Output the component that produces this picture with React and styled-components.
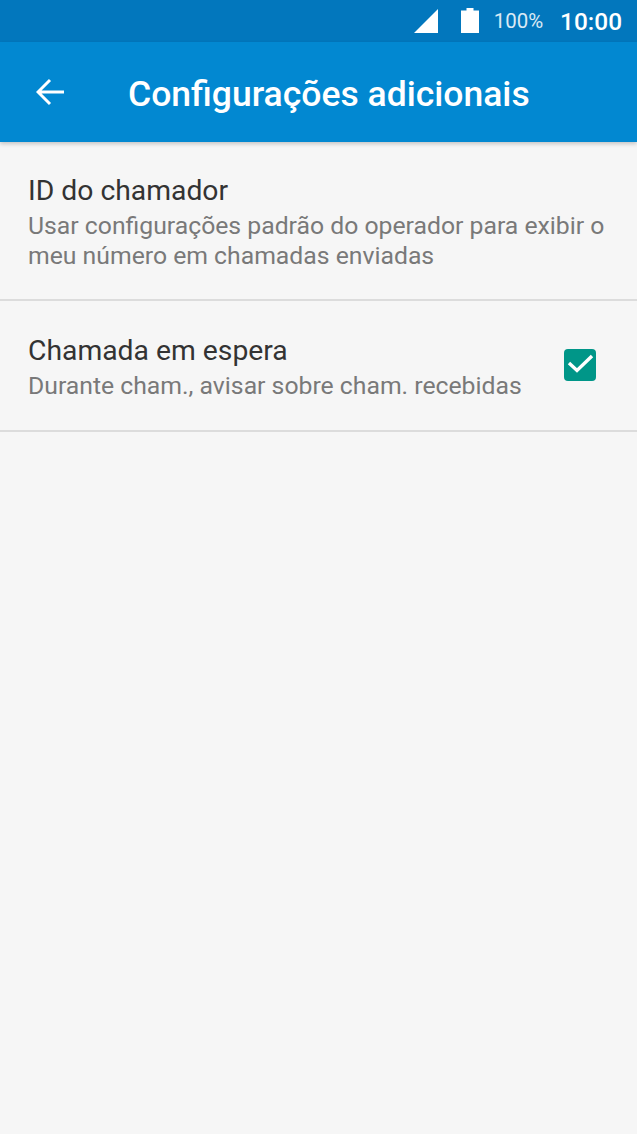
import React from 'react';
import styled, { createGlobalStyle } from 'styled-components';

const GlobalStyle = createGlobalStyle`
  html, body {
    margin: 0;
    padding: 0;
    background: #f6f6f6;
  }
  * {
    box-sizing: border-box;
  }
`;

const Screen = styled.div`
  width: 637px;
  height: 1134px;
  background: #f6f6f6;
  font-family: Roboto, 'Noto Sans', sans-serif;
  overflow: hidden;
`;

const StatusBar = styled.div`
  height: 42px;
  background: #0277bd;
  display: flex;
  align-items: center;
  justify-content: flex-end;
  padding-right: 15px;
  color: #fff;
`;

const Battery = styled.svg`
  margin: 0 0 1px 22px;
`;

const BatteryText = styled.span`
  font-size: 20.4px;
  margin-left: 15px;
  opacity: 0.85;
`;

const Clock = styled.span`
  font-size: 24.4px;
  font-weight: 500;
  margin-left: 17px;
`;

const AppBar = styled.header`
  height: 100px;
  background: #0288d1;
  display: flex;
  align-items: center;
  padding: 0 0 0 36px;
  box-shadow: 0 2px 4px rgba(0, 0, 0, 0.2);
`;

const BackButton = styled.svg`
  flex: none;
  display: block;
`;

const Title = styled.h1`
  margin: 3px 0 0 64px;
  font-size: 35.5px;
  font-weight: 500;
  color: #fff;
`;

const List = styled.div`
  display: flex;
  flex-direction: column;
`;

const Row = styled.div`
  display: flex;
  align-items: center;
  justify-content: space-between;
  height: ${(p) => p.$height}px;
  padding: 2px 41px 0 28px;
  border-bottom: 2px solid #dcdcdc;
`;

const RowText = styled.div`
  display: flex;
  flex-direction: column;
  white-space: nowrap;
`;

const RowTitle = styled.div`
  font-size: 28.3px;
  line-height: 36px;
  margin: 1px 0 2px;
  color: #333;
`;

const RowSummary = styled.div`
  font-size: 24.75px;
  line-height: 30px;
  color: #797979;
`;

const Checkbox = styled.div`
  width: 32px;
  height: 32px;
  margin-top: -4px;
  border-radius: 4px;
  background: #009688;
  display: flex;
  align-items: center;
  justify-content: center;
  flex: none;
`;

export default function App() {
  return (
    <Screen>
      <GlobalStyle />
      <StatusBar>
        <svg width="26" height="26" viewBox="0 0 26 26">
          <path d="M1 25 L25 1 V25 Z" fill="#fff" />
        </svg>
        <Battery width="18" height="25" viewBox="0 0 18 25">
          <path d="M5.5 0 H12.5 V2.5 H18 V25 H0 V2.5 H5.5 Z" fill="#fff" />
        </Battery>
        <BatteryText>100%</BatteryText>
        <Clock>10:00</Clock>
      </StatusBar>
      <AppBar>
        <BackButton width="28" height="28" viewBox="0 0 28 28" fill="none">
          <path d="M28 14 H2 M14 2 L2 14 L14 26" stroke="#fff" strokeWidth="3" />
        </BackButton>
        <Title>Configurações adicionais</Title>
      </AppBar>
      <List>
        <Row $height={159}>
          <RowText>
            <RowTitle>ID do chamador</RowTitle>
            <RowSummary>
              Usar configurações padrão do operador para exibir o
              <br />
              meu número em chamadas enviadas
            </RowSummary>
          </RowText>
        </Row>
        <Row $height={131}>
          <RowText>
            <RowTitle>Chamada em espera</RowTitle>
            <RowSummary>Durante cham., avisar sobre cham. recebidas</RowSummary>
          </RowText>
          <Checkbox>
            <svg width="27" height="27" viewBox="0 0 27 27" fill="none">
              <path d="M2 12 L10 19.5 L25 5" stroke="#fff" strokeWidth="3.4" />
            </svg>
          </Checkbox>
        </Row>
      </List>
    </Screen>
  );
}
